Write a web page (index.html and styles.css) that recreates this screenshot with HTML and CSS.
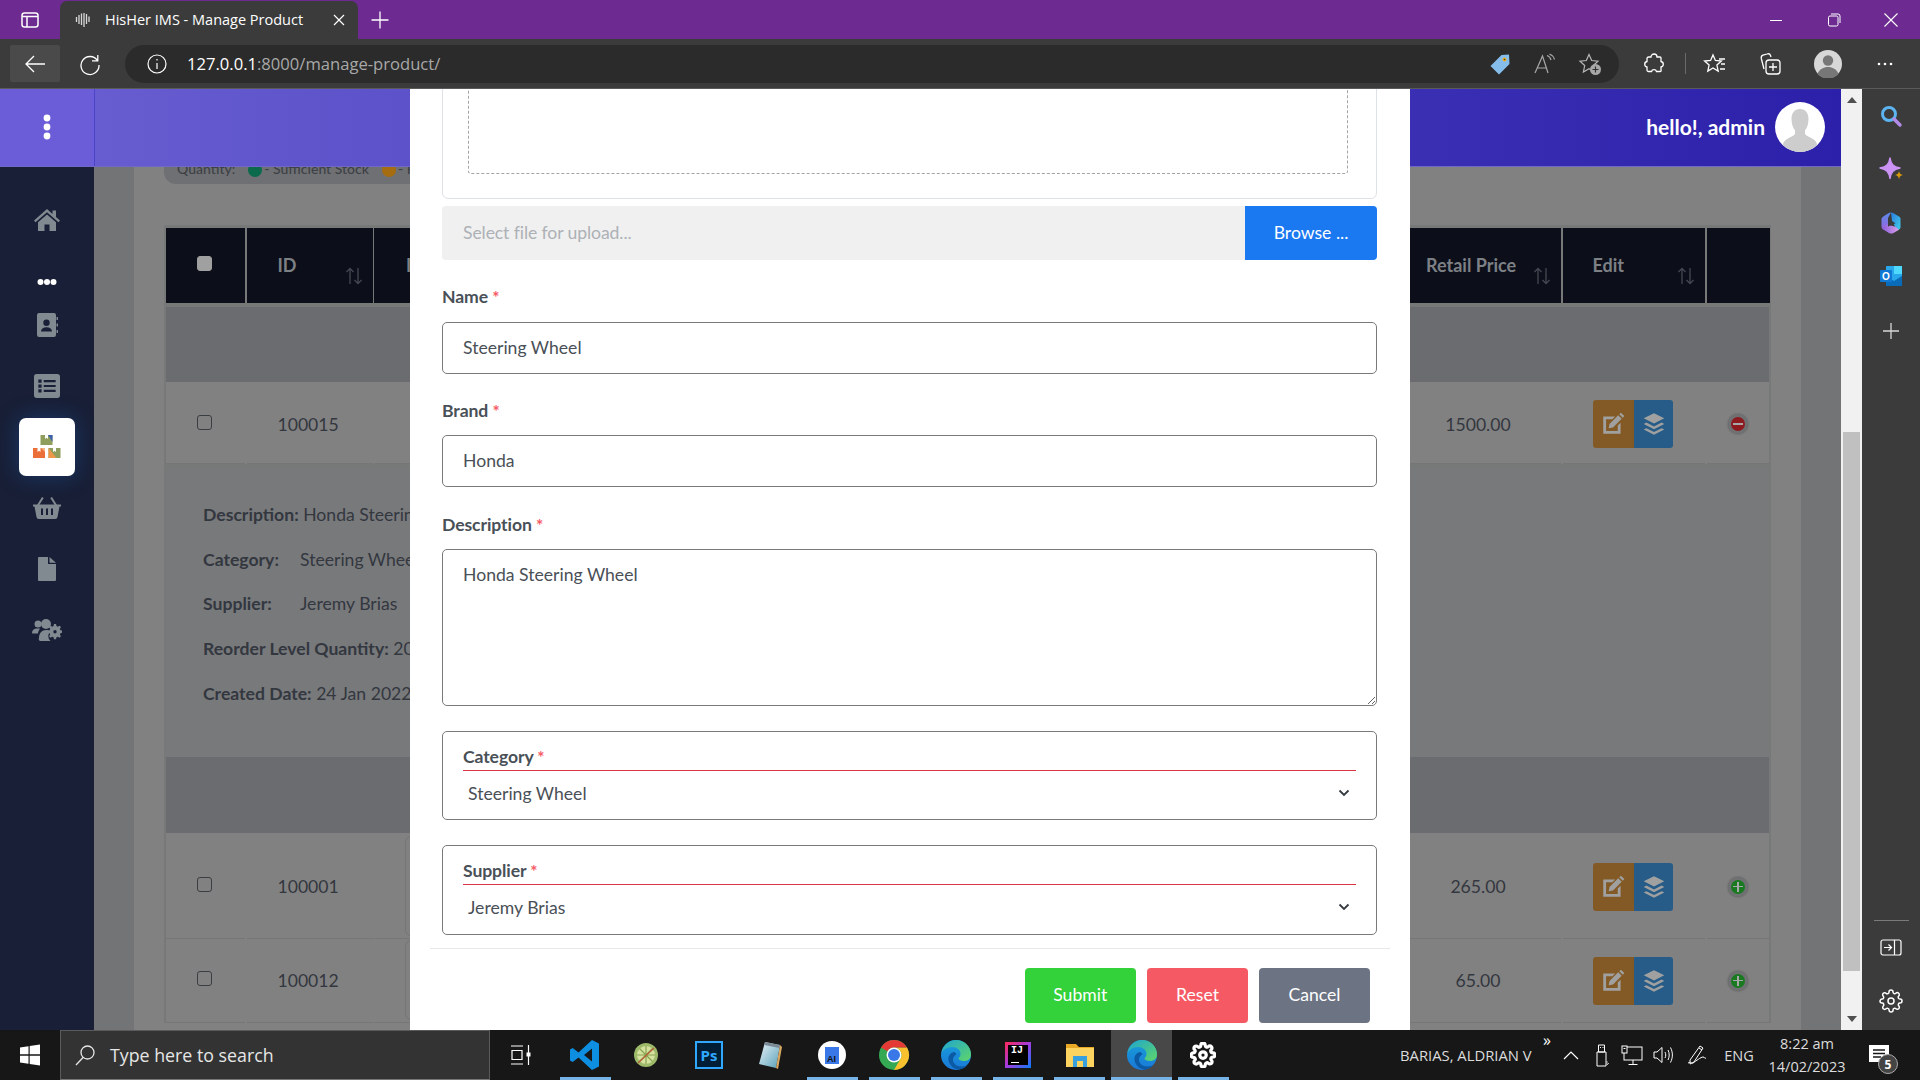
FILE: index.html
```html
<!DOCTYPE html>
<html lang="en">
<head>
<meta charset="utf-8">
<title>HisHer IMS - Manage Product</title>
<link rel="stylesheet" href="styles.css">
</head>
<body>
<svg class="sprite" aria-hidden="true">
  <defs>
    <linearGradient id="edgeBlue" x1="0" y1="0" x2="0" y2="1"><stop offset="0" stop-color="#18a0d8"/><stop offset="1" stop-color="#1a78d8"/></linearGradient>
    <linearGradient id="edgeGreen" x1="0" y1="0" x2="1" y2="1"><stop offset="0" stop-color="#1fa5d0"/><stop offset="1" stop-color="#5fd668"/></linearGradient>
    <linearGradient id="noteGrad" x1="0" y1="0" x2="1" y2="1"><stop offset="0" stop-color="#e8f4f8"/><stop offset="1" stop-color="#5aa0b8"/></linearGradient>
    <linearGradient id="copLeft" x1="0" y1="0" x2="0" y2="1"><stop offset="0" stop-color="#5a8ae8"/><stop offset="1" stop-color="#a060e0"/></linearGradient>
    <linearGradient id="copTop" x1="0" y1="0" x2="1" y2="1"><stop offset="0" stop-color="#2c7be0"/><stop offset="1" stop-color="#40d0e8"/></linearGradient>
    <linearGradient id="copBot" x1="0" y1="0" x2="1" y2="0"><stop offset="0" stop-color="#8a5cd8"/><stop offset="1" stop-color="#d8a0ec"/></linearGradient>
    <symbol id="gear" viewBox="0 0 24 24"><path d="M12 15a3 3 0 1 0 0-6 3 3 0 0 0 0 6z M19.4 15a1.65 1.65 0 0 0 .33 1.82l.06.06a2 2 0 0 1 0 2.83 2 2 0 0 1-2.83 0l-.06-.06a1.65 1.65 0 0 0-1.82-.33 1.65 1.65 0 0 0-1 1.51V21a2 2 0 0 1-2 2 2 2 0 0 1-2-2v-.09A1.65 1.65 0 0 0 9 19.4a1.65 1.65 0 0 0-1.82.33l-.06.06a2 2 0 0 1-2.83 0 2 2 0 0 1 0-2.83l.06-.06a1.65 1.65 0 0 0 .33-1.82 1.65 1.65 0 0 0-1.51-1H3a2 2 0 0 1-2-2 2 2 0 0 1 2-2h.09A1.65 1.65 0 0 0 4.6 9a1.65 1.65 0 0 0-.33-1.82l-.06-.06a2 2 0 0 1 0-2.83 2 2 0 0 1 2.83 0l.06.06a1.65 1.65 0 0 0 1.82.33H9a1.65 1.65 0 0 0 1-1.51V3a2 2 0 0 1 2-2 2 2 0 0 1 2 2v.09a1.65 1.65 0 0 0 1 1.51 1.65 1.65 0 0 0 1.82-.33l.06-.06a2 2 0 0 1 2.83 0 2 2 0 0 1 0 2.83l-.06.06a1.65 1.65 0 0 0-.33 1.82V9a1.65 1.65 0 0 0 1.51 1H21a2 2 0 0 1 2 2 2 2 0 0 1-2 2h-.09a1.65 1.65 0 0 0-1.51 1z"/></symbol>
    <symbol id="edge" viewBox="0 0 32 32">
      <circle cx="16" cy="16" r="15" fill="url(#edgeBlue)"/>
      <path d="M1.500 14C3 6.500 9 1 16 1c8.500 0 15 6.500 15 14.500 0 4.500-3.500 6.500-7 6.500-3 0-5.500-1-5.500-2.500 0-1 2-1.500 2-4.500 0-4-3.500-7-8.500-7C6.500 8 3 11 1.500 14z" fill="url(#edgeGreen)"/>
      <path d="M14 13c-4 1-6 4-5.500 8 .6 5 5 9 10.500 9.700 3-.5 6-2 8-4.400-5 2.200-11.500 1.500-13.500-3-1.300-3.300 0-6.300 3-8-.8-1.200-1.500-2.200-2.500-2.300z" fill="#0c59a4"/>
    </symbol>
    <symbol id="pen-box" viewBox="0 0 24 24"><path d="M3 5h11l-2.600 2.600H5.600v10.800h10.800v-5l2.600-2.600V21H3z"/><path d="M19.300 1.500l3.200 3.200-1.500 1.500-3.200-3.200zM16.800 4l3.200 3.200-8 8-4 .8.800-4z"/></symbol>
    <symbol id="layers" viewBox="0 0 24 24"><path d="M12 2l9.500 4.700L12 11.500 2.500 6.700z"/><path d="M5 10.700l7 3.500 7-3.500 2.500 1.300-9.500 4.800L2.500 12z"/><path d="M5 15.900l7 3.500 7-3.500 2.500 1.200L12 22l-9.500-4.900z"/></symbol>
    <symbol id="sort-arrows" viewBox="0 0 18 18"><path d="M5 17V1.500M1.500 5L5 1.500 8.500 5M13 1v15.500M9.500 13l3.500 3.500 3.500-3.500" fill="none" stroke-width="1.300"/></symbol>
  </defs>
</svg>

<header class="tabstrip">
  <div class="strip-btn first">
    <svg class="i20" viewBox="0 0 20 20" fill="none" stroke="#fff" stroke-width="1.500"><rect x="2" y="3" width="16" height="14" rx="2.500"/><path d="M2 6.500h16M7 6.500V17" stroke-width="1.500"/></svg>
  </div>
  <div class="tab">
    <svg class="i18 favicon" viewBox="0 0 18 18" fill="none" stroke="#d8d8d8" stroke-width="1.300"><path d="M2.500 6v5M5 4v9M7.500 2.500V14M10 2v14M12.500 3v10M15 5.500V11"/></svg>
    <span class="tab-title">HisHer IMS - Manage Product</span>
    <svg class="i14 tab-close" viewBox="0 0 14 14" stroke="#fff" stroke-width="1.200"><path d="M2 2l10 10M12 2L2 12"/></svg>
  </div>
  <div class="strip-btn newtab">
    <svg class="i20" viewBox="0 0 20 20" stroke="#fff" stroke-width="1.300"><path d="M10 1.500v17M1.500 10h17"/></svg>
  </div>
  <div class="grow"></div>
  <div class="win-btn"><svg class="i14" viewBox="0 0 14 14" stroke="#fff" stroke-width="1"><path d="M1 7.500h12"/></svg></div>
  <div class="win-btn"><svg class="i14" viewBox="0 0 14 14" fill="none" stroke="#fff" stroke-width="1"><rect x="1.500" y="3" width="9.500" height="10" rx="1.500"/><path d="M4 1h7a2 2 0 0 1 2 2v7"/></svg></div>
  <div class="win-btn"><svg class="i16" viewBox="0 0 16 16" stroke="#fff" stroke-width="1.100"><path d="M1.500 1.500l13 13M14.500 1.500l-13 13"/></svg></div>
</header>

<nav class="toolbar">
  <div class="tool back"><svg class="i24" viewBox="0 0 24 24" fill="none" stroke="#fff" stroke-width="1.300"><path d="M22 12H3M11 4l-8 8 8 8"/></svg></div>
  <div class="tool refresh"><svg class="i24" viewBox="0 0 24 24" fill="none" stroke="#fff" stroke-width="1.300"><path d="M19.500 8.500A9 9 0 1 0 21 13M19.800 3v5.800H14"/></svg></div>
  <div class="address">
    <svg class="i22 addr-info" viewBox="0 0 22 22" fill="none" stroke="#fff" stroke-width="1.200"><circle cx="11" cy="11" r="9"/><path d="M11 10v6M11 6v1.600"/></svg>
    <span class="url"><span class="url-host">127.0.0.1</span>:8000/manage-product/</span>
    <div class="grow"></div>
    <div class="addr-tool"><svg class="i24" viewBox="0 0 24 24"><path d="M21 2.500l.5 9.500L11 22.500 2.500 14 13.500 3z" fill="#85bdeb"/><circle cx="16.500" cy="7.500" r="2" fill="#f2b01e"/><circle cx="16.500" cy="7.500" r=".8" fill="#333"/></svg></div>
    <div class="addr-tool"><svg class="i24" viewBox="0 0 24 24" fill="none" stroke="#a8a8a8" stroke-width="1.200"><path d="M2 21L9.500 4 15 21M4.500 16h9M14 3.500c2 .8 3.500 2.300 4 4.500M16.500 2c2.500 1 4.300 3 5 5.500"/></svg></div>
    <div class="addr-tool"><svg class="i24" viewBox="0 0 24 24"><path d="M11 2.500l2.700 6 6.300.7-4.700 4.300 1.300 6.500-5.600-3.300L5.400 20l1.300-6.500L2 9.200l6.300-.7z" fill="none" stroke="#b8b8b8" stroke-width="1.200"/><circle cx="17.500" cy="17.500" r="5.500" fill="#a8a8a8"/><path d="M17.500 14.500v6M14.500 17.500h6" stroke="#333" stroke-width="1.200"/></svg></div>
  </div>
  <div class="tools">
    <div class="tool t-puzzle"><svg class="i24" viewBox="0 0 24 24" fill="none" stroke="#fff" stroke-width="1.300"><path d="M9 5a3 3 0 0 1 6 0h3a1 1 0 0 1 1 1v3.500a2.800 2.800 0 0 1 0 5.500v3a1 1 0 0 1-1 1.500h-3.500a2.600 2.600 0 0 0-5 0H6.500a1.500 1.500 0 0 1-1.500-1.500v-3a2.800 2.800 0 0 1 0-5.500V6.500A1.500 1.500 0 0 1 6.500 5z"/></svg></div>
    <div class="tool-sep"></div>
    <div class="tool t-fav"><svg class="i24" viewBox="0 0 24 24" fill="none" stroke="#fff" stroke-width="1.300"><path d="M10 3l2.400 5.500 6 .6-4.500 4 1.300 6L10 16l-5.200 3.100 1.300-6-4.500-4 6-.6zM16 7h6M18 12h4M17 17h5"/></svg></div>
    <div class="tool t-coll"><svg class="i24" viewBox="0 0 24 24" fill="none" stroke="#fff" stroke-width="1.300"><rect x="8" y="8" width="14" height="14" rx="3"/><path d="M15 11v8M11 15h8M13 5l-.5-1.500C12 2 10.500 1.500 9 2L5 3.200C3.500 3.700 3 5 3.300 6.500L6 17"/></svg></div>
    <div class="tool t-avatar"><svg class="i28" viewBox="0 0 28 28"><circle cx="14" cy="14" r="14" fill="#d8d8d8"/><circle cx="14" cy="10.500" r="5.200" fill="#777"/><path d="M3.500 24c2-5 6-7 10.500-7s8.500 2 10.500 7a14 14 0 0 1-21 0z" fill="#777"/></svg></div>
    <div class="tool t-dots"><svg class="i18" viewBox="0 0 18 18" fill="#fff"><circle cx="3" cy="9" r="1.300"/><circle cx="9" cy="9" r="1.300"/><circle cx="15" cy="9" r="1.300"/></svg></div>
  </div>
</nav>

<div class="viewport">
  <div class="page">
    <div class="topbar">
      <div class="brand"><svg class="kebab" viewBox="0 0 8 26" fill="#fff"><circle cx="4" cy="4" r="3.400"/><circle cx="4" cy="13" r="3.400"/><circle cx="4" cy="22" r="3.400"/></svg></div>
      <div class="userbar">
        <span class="hello">hello!, admin</span>
        <svg class="avatar" viewBox="0 0 50 50"><circle cx="25" cy="25" r="25" fill="#fff"/><path d="M25 7c5.500 0 8.500 4 8.500 10 0 5-1.500 9-3.500 11.500v3c0 2 4 3 8 5.500 3 2 4 4 4 6A24.800 24.800 0 0 1 25 50a24.800 24.800 0 0 1-17-7c0-2 1-4 4-6 4-2.500 8-3.500 8-5.500v-3C18 26 16.500 22 16.500 17 16.500 11 19.500 7 25 7z" fill="#cdcdcd"/></svg>
      </div>
    </div>

    <div class="workspace">
      <aside class="sidebar">
        <div class="side-item"><svg class="side-icon" viewBox="0 0 26 24"><path d="M13 1L0 12.500l1.500 1.800L13 4.300l11.500 10 1.500-1.800-4-3.500V2.500h-3.500v3.400z"/><path d="M13 6.500L4 14.300V23h6.500v-6.500h5V23H22v-8.700z"/></svg></div>
        <div class="side-more"><svg class="more-icon" viewBox="0 0 20 8" fill="#fff"><circle cx="3.500" cy="4" r="3"/><circle cx="10" cy="4" r="3"/><circle cx="16.500" cy="4" r="3"/></svg></div>
        <div class="side-item"><svg class="side-icon" viewBox="0 0 24 24"><path fill-rule="evenodd" d="M4 0h15a2 2 0 0 1 2 2v20a2 2 0 0 1-2 2H4a2 2 0 0 1-2-2V2a2 2 0 0 1 2-2zm7.500 6.500a3.200 3.200 0 1 0 0 6.400 3.200 3.200 0 0 0 0-6.400zM6 18.500h11c0-2.500-2-4.200-5.500-4.200S6 16 6 18.500z"/><path d="M21.500 4h1.500v3h-1.500zM21.500 10.500h1.500v3h-1.500zM21.500 17h1.500v3h-1.500z"/></svg></div>
        <div class="side-item"><svg class="side-icon" viewBox="0 0 24 22"><path fill-rule="evenodd" d="M2.500 0h19A2.500 2.500 0 0 1 24 2.500v17a2.500 2.500 0 0 1-2.500 2.500h-19A2.500 2.500 0 0 1 0 19.500v-17A2.500 2.500 0 0 1 2.500 0zM4 5v3h3V5zm0 4.500v3h3v-3zM4 14v3h3v-3zm5-8.500v2h11v-2zm0 4.500v2h11v-2zm0 4.500v2h11v-2z"/></svg></div>
        <div class="side-item"><div class="side-active">
          <svg class="box-icon" viewBox="0 0 28 24">
            <rect x="7.500" y="1" width="12" height="10" fill="#8f9e5c"/><path d="M12 1h3v4l-1.500-1.300L12 5z" fill="#fff"/><path d="M15 1h4.500v7z" fill="#3f62b0"/>
            <rect x="0" y="14" width="12" height="10" fill="#ea6f38"/><path d="M4.500 14h3v4L6 16.700 4.500 18z" fill="#fff"/><path d="M8 14h4v4z" fill="#f4b684"/>
            <rect x="15.500" y="14" width="12" height="10" fill="#8f9e5c"/><path d="M20 14h3v4l-1.500-1.300L20 18z" fill="#fff"/><path d="M15.500 14l8 10h-8z" fill="#ef9648"/>
          </svg>
        </div></div>
        <div class="side-item"><svg class="side-icon wide" viewBox="0 0 28 22"><path d="M9 0l1.700 1-4.400 7H4zM19 0l-1.700 1 4.400 7H24z"/><path fill-rule="evenodd" d="M0 7.500h28v2h-1.500L24.500 20a2.300 2.300 0 0 1-2.300 2H5.800a2.300 2.300 0 0 1-2.300-2L1.500 9.500H0zM8 11.500V18h2v-6.500zm5 0V18h2v-6.500zm5 0V18h2v-6.500z"/></svg></div>
        <div class="side-item"><svg class="side-icon" viewBox="0 0 18 24"><path d="M0 1a1 1 0 0 1 1-1h9v7h8v16a1 1 0 0 1-1 1H1a1 1 0 0 1-1-1z"/><path d="M11.500 0L18 5.800h-6.500z"/></svg></div>
        <div class="side-item"><svg class="side-icon wider" viewBox="0 0 30 22"><circle cx="6" cy="5" r="3.500"/><circle cx="14" cy="5" r="5"/><path d="M0 14c0-3 2-4.500 5-4.500h3c-1 2-2 3-2 5H1a1 1 0 0 1-1-.5z"/><path d="M7 19c0-5 3-8 7-8 2 0 3 .5 4 1.200l-1 2a7 7 0 0 0 1.500 7.800H9a2 2 0 0 1-2-3z"/><path fill-rule="evenodd" d="M23 9l1 .1.500 2 1.300.6 1.800-1 1.300 1.400-1 1.800.5 1.300 2 .5v2l-2 .5-.5 1.300 1 1.800-1.300 1.400-1.800-1-1.300.5-.5 2h-2l-.5-2-1.300-.5-1.800 1-1.300-1.400 1-1.800-.5-1.300-2-.5v-2l2-.5.5-1.300-1-1.800 1.300-1.400 1.800 1 1.300-.6.500-2zm0 6a1.700 1.700 0 1 0 0 3.400 1.700 1.700 0 0 0 0-3.400z" transform="translate(0 -4)"/></svg></div>
      </aside>

      <main class="main">
        <div class="panel">
          <div class="legend">
            <span>Quantity:</span>
            <i class="dot dot-green"></i><span>- Sufficient Stock</span>
            <i class="dot dot-orange"></i><span>- Reorder Level</span>
          </div>
          <div class="table">
            <div class="tr thead">
              <div class="th center cb-cell"><span class="cb cb-on"></span></div>
              <div class="th"><span class="th-label id-label">ID</span><svg class="sort" aria-hidden="true"><use href="#sort-arrows"/></svg></div>
              <div class="th th-item"><span class="th-label">Image</span></div>
              <div class="th"><span class="th-label retail-label">Retail Price</span><svg class="sort" aria-hidden="true"><use href="#sort-arrows"/></svg></div>
              <div class="th"><span class="th-label edit-label">Edit</span><svg class="sort" aria-hidden="true"><use href="#sort-arrows"/></svg></div>
              <div class="th"></div>
            </div>
            <div class="band first-band"></div>
            <div class="tr row row-a">
              <div class="td center cb-cell"><span class="cb"></span></div>
              <div class="td id-cell">100015</div>
              <div class="td"></div>
              <div class="td center">1500.00</div>
              <div class="td center"><div class="actions"><span class="act act-edit"><svg class="act-icon" aria-hidden="true"><use href="#pen-box"/></svg></span><span class="act act-stock"><svg class="act-icon" aria-hidden="true"><use href="#layers"/></svg></span></div></div>
              <div class="td center"><span class="toggle toggle-minus"></span></div>
            </div>
            <div class="detail">
              <p class="detail-line"><b>Description:</b> Honda Steering Wheel</p>
              <p class="detail-line"><b class="detail-key">Category:</b>Steering Wheel</p>
              <p class="detail-line"><b class="detail-key">Supplier:</b>Jeremy Brias</p>
              <p class="detail-line"><b>Reorder Level Quantity:</b> 20</p>
              <p class="detail-line"><b>Created Date:</b> 24 Jan 2022</p>
            </div>
            <div class="band second-band"></div>
            <div class="tr row row-b">
              <div class="td center cb-cell"><span class="cb"></span></div>
              <div class="td id-cell">100001</div>
              <div class="td item-cell"><span class="item-frame"></span></div>
              <div class="td center">265.00</div>
              <div class="td center"><div class="actions"><span class="act act-edit"><svg class="act-icon" aria-hidden="true"><use href="#pen-box"/></svg></span><span class="act act-stock"><svg class="act-icon" aria-hidden="true"><use href="#layers"/></svg></span></div></div>
              <div class="td center"><span class="toggle toggle-plus"></span></div>
            </div>
            <div class="tr row row-c">
              <div class="td center cb-cell"><span class="cb"></span></div>
              <div class="td id-cell">100012</div>
              <div class="td item-cell"><span class="item-frame"></span></div>
              <div class="td center">65.00</div>
              <div class="td center"><div class="actions"><span class="act act-edit"><svg class="act-icon" aria-hidden="true"><use href="#pen-box"/></svg></span><span class="act act-stock"><svg class="act-icon" aria-hidden="true"><use href="#layers"/></svg></span></div></div>
              <div class="td center"><span class="toggle toggle-plus"></span></div>
            </div>
          </div>
        </div>
      </main>
    </div>

    <section class="modal">
      <div class="preview"><div class="dropzone"></div></div>
      <div class="filerow">
        <div class="file-hint">Select file for upload...</div>
        <div class="browse">Browse ...</div>
      </div>
      <label class="flabel first-label">Name <em>*</em></label>
      <input class="finput" type="text" value="Steering Wheel">
      <label class="flabel brand-label">Brand <em>*</em></label>
      <input class="finput" type="text" value="Honda">
      <label class="flabel desc-label">Description <em>*</em></label>
      <textarea class="farea">Honda Steering Wheel</textarea>
      <div class="fselect select-cat">
        <div class="fselect-label">Category <em>*</em></div>
        <div class="fselect-value"><span>Steering Wheel</span><svg class="chev" viewBox="0 0 12 8" fill="none" stroke="#343a40" stroke-width="1.800"><path d="M1.500 1.500L6 6l4.500-4.500"/></svg></div>
      </div>
      <div class="fselect select-sup">
        <div class="fselect-label">Supplier <em>*</em></div>
        <div class="fselect-value"><span>Jeremy Brias</span><svg class="chev" viewBox="0 0 12 8" fill="none" stroke="#343a40" stroke-width="1.800"><path d="M1.500 1.500L6 6l4.500-4.500"/></svg></div>
      </div>
      <div class="mfooter">
        <button class="btn btn-submit" type="button">Submit</button>
        <button class="btn btn-reset" type="button">Reset</button>
        <button class="btn btn-cancel" type="button">Cancel</button>
      </div>
    </section>
  </div>

  <div class="scrollbar">
    <span class="arrow-up"></span>
    <span class="thumb"></span>
    <div class="grow"></div>
    <span class="arrow-down"></span>
  </div>

  <aside class="edgebar">
    <div class="edge-item"><svg class="i24" viewBox="0 0 24 24" fill="none"><circle cx="10" cy="10" r="6.500" stroke="#5cb4f0" stroke-width="3"/><path d="M15 15l6 6" stroke="#b28ae8" stroke-width="3.500" stroke-linecap="round"/></svg></div>
    <div class="edge-item"><svg class="i26 sparkle" viewBox="0 0 26 26"><path d="M11 2c1 6.500 3.500 9 10 10-6.500 1.300-9 3.800-10 10.500C10 15.800 7.500 13.300 1 12c6.500-1 9-3.500 10-10z" fill="#cb94f4" stroke="#cb94f4" stroke-width="1.500" stroke-linejoin="round"/><path d="M20 15c.4 2.500 1.500 3.600 4 4-2.500.5-3.600 1.500-4 4.500-.4-3-1.500-4-4-4.500 2.500-.4 3.600-1.500 4-4z" fill="#d8980c"/></svg></div>
    <div class="edge-item"><svg class="i24" viewBox="0 0 24 24"><path d="M12 1.500c1 0 2 .5 3 1l5 3c1 .6 1.500 1.500 1.500 2.500v8c0 1-.5 2-1.500 2.500l-2 1-5-9.500z" fill="url(#copTop)"/><path d="M12 1.500c-1 0-2 .5-3 1l-4 2.500C3.500 6 2.500 7 2.500 8.500v7c0 1.500 1 2.500 2 3L9 21V7z" fill="url(#copLeft)"/><path d="M2.800 17c.4.700 1 1.200 1.700 1.500l5.500 3.500c1.500.8 3 .8 4.500 0l5.500-3.300-3.500-3L8 13.500z" fill="url(#copBot)"/><path d="M9 7.500l7.500 4.700L9 15.500z" fill="#3b3b3b"/></svg></div>
    <div class="edge-item"><svg class="i24" viewBox="0 0 24 24"><rect x="7" y="2" width="16" height="20" rx="1" fill="#28a8ea"/><rect x="15" y="2" width="8" height="8" fill="#50d9ff"/><path d="M7 12l8 5 8-5v10H7z" fill="#0a6cb8"/><rect x="1" y="6" width="12" height="12" rx="1" fill="#0f78d4"/><text class="outlook-o" x="7" y="15.500" text-anchor="middle">O</text></svg></div>
    <div class="edge-item edge-plus"><svg class="i20" viewBox="0 0 20 20" stroke="#d8d8d8" stroke-width="1.300"><path d="M10 2v16M2 10h16"/></svg></div>
    <div class="grow"></div>
    <div class="edge-divider"></div>
    <div class="edge-item"><svg class="i22" viewBox="0 0 22 20" fill="none" stroke="#fff" stroke-width="1.200"><rect x="1" y="2" width="20" height="15" rx="2"/><path d="M14.500 2v15M4 9.500h7.500M8.500 6.500l3 3-3 3"/></svg></div>
    <div class="edge-item edge-gear"><svg class="i24 gear-line" aria-hidden="true"><use href="#gear"/></svg></div>
  </aside>
</div>

<footer class="taskbar">
  <div class="start"><svg class="i22" viewBox="0 0 22 22" fill="#fff"><path d="M1 3.500l8.500-1.200v8H1zM10.700 2.100L21 .6v9.700H10.700zM1 11.700h8.500v8L1 18.500zM10.700 11.700H21v9.700l-10.300-1.500z"/></svg></div>
  <div class="search">
    <svg class="i24" viewBox="0 0 24 24" fill="none" stroke="#e6e6e6" stroke-width="1.300"><circle cx="14.500" cy="9.500" r="6.500"/><path d="M10 14.500L3 22"/></svg>
    <span class="search-text">Type here to search</span>
  </div>
  <div class="taskview"><svg class="i22" viewBox="0 0 22 22" fill="none" stroke="#fff" stroke-width="1.200"><path d="M2 2h12M2 20h12M3 6.500h10v9H3zM19.500 1v20"/><rect x="17.500" y="8.500" width="4" height="4" fill="#fff" stroke="none"/></svg></div>
  <div class="task on"><svg class="i32" viewBox="0 0 32 32"><path d="M23 1l7 3.500v23L23 31 9.500 18.500 3.700 23 1 21.500v-11L3.700 9l5.800 4.500zm0 8.500L15 16l8 6.500z" fill="#0e8ee0" fill-rule="evenodd"/></svg></div>
  <div class="task plain lime"><svg class="i26" viewBox="0 0 26 26"><circle cx="13" cy="13" r="12" fill="#9db96a"/><circle cx="13" cy="13" r="9" fill="#d6e2a0"/><path d="M13 4v18M4 13h18M6.500 6.500l13 13M19.500 6.500l-13 13" stroke="#86a34e" stroke-width="1.200"/><path d="M5 21L21 6" stroke="#b4623a" stroke-width="1.500"/></svg></div>
  <div class="task plain"><div class="ps-icon">Ps</div></div>
  <div class="task plain note"><svg class="i32" viewBox="0 0 32 32"><path d="M12 3l15 3-4 23L6 25z" fill="url(#noteGrad)"/><path d="M12 3l15 3-.6 3-15-3z" fill="#7a8a95"/><path d="M27 6l2 2-4 22-2-1z" fill="#d8a860"/></svg></div>
  <div class="task"><div class="ai-icon"><span class="ai-doc">AI</span></div></div>
  <div class="task"><svg class="i32" viewBox="0 0 32 32"><circle cx="16" cy="16" r="15" fill="#34a853"/><path d="M29 8.500A15 15 0 0 1 16 31l6.500-11.250A7.500 7.500 0 0 0 16 8.500z" fill="#fbc02d"/><path d="M3 8.500a15 15 0 0 1 26 0H16a7.500 7.500 0 0 0-6.500 3.750z" fill="#e53935"/><circle cx="16" cy="16" r="7.500" fill="#fff"/><circle cx="16" cy="16" r="6" fill="#3b78e7"/></svg></div>
  <div class="task"><svg class="i32" aria-hidden="true"><use href="#edge"/></svg></div>
  <div class="task"><div class="ij-icon"><div class="ij-inner">IJ<i class="ij-bar"></i></div></div></div>
  <div class="task"><svg class="i30" viewBox="0 0 30 30"><path d="M1 4h10l3 3h15v20H1z" fill="#e9a825"/><rect x="1" y="8" width="28" height="19" fill="#fbd35e"/><path d="M8 27V16h14v11h-4v-6h-6v6z" fill="#38a0de"/></svg></div>
  <div class="task active"><svg class="i32" aria-hidden="true"><use href="#edge"/></svg></div>
  <div class="task gear-task"><svg class="i26 gear-solid" aria-hidden="true"><use href="#gear"/></svg></div>

  <div class="tray">
    <span class="tray-user">BARIAS, ALDRIAN V</span>
    <span class="tray-more">»</span>
    <div class="tray-icon"><svg class="i18" viewBox="0 0 18 18" fill="none" stroke="#fff" stroke-width="1.200"><path d="M2 13l7-7 7 7"/></svg></div>
    <div class="tray-icon icon-gap"><svg class="i24" viewBox="0 0 24 24" fill="none" stroke="#fff" stroke-width="1"><path d="M7 9h9v14H7zM8.500 2h6v7h-6zM10 4.500h1M12.500 4.500h1"/><path d="M17 18v4l2-2" stroke="#bbb"/></svg></div>
    <div class="tray-icon"><svg class="i24" viewBox="0 0 24 24" fill="none" stroke="#fff" stroke-width="1"><rect x="4" y="4" width="18" height="13"/><path d="M13 17v4M8.500 21.500h9"/><rect x="2" y="3" width="5" height="7" fill="#171717"/><path d="M3.500 5.500h2"/></svg></div>
    <div class="tray-icon"><svg class="i24" viewBox="0 0 24 24" fill="none" stroke="#fff" stroke-width="1"><path d="M4 9v6h3l5 4.500v-15L7 9zM15 9c1 2 1 4 0 6M18 7c1.600 3 1.600 7 0 10M20.500 4.500c2.500 5 2.500 10 0 15"/></svg></div>
    <div class="tray-icon tray-pen"><svg class="i24" viewBox="0 0 24 24" fill="none" stroke="#fff" stroke-width="1"><path d="M5 17L15 3l3 2-9 14-4 2zM3 20c4-2 3 1 5 0 3-2 8-6 10-6 2 0 1 2 3 1M14 5l3 2"/></svg></div>
    <span class="tray-lang">ENG</span>
    <div class="clock"><span>8:22 am</span><span>14/02/2023</span></div>
    <div class="notif">
      <svg class="i22" viewBox="0 0 22 22"><path d="M1 1h20v17H1z" fill="#fff"/><path d="M5 6h12M5 9.500h12M5 13h8" stroke="#171717" stroke-width="1.300"/></svg>
      <span class="notif-badge">5</span>
    </div>
  </div>
</footer>
</body>
</html>
```
FILE: styles.css
```css
* { box-sizing: border-box; }
html, body { margin: 0; padding: 0; height: 100%; overflow: hidden; }
body { width: 1920px; height: 1080px; display: flex; flex-direction: column; font-family: "Lato", "Liberation Sans", sans-serif; background: #171717; }
.sprite { position: absolute; width: 0; height: 0; }
.grow { flex: 1 1 auto; }
.i14 { width: 14px; height: 14px; }
.i16 { width: 16px; height: 16px; }
.i18 { width: 18px; height: 18px; }
.i20 { width: 20px; height: 20px; }
.i22 { width: 22px; height: 22px; }
.i24 { width: 24px; height: 24px; }
.i26 { width: 26px; height: 26px; }
.i28 { width: 28px; height: 28px; }
.i30 { width: 30px; height: 30px; }
.i32 { width: 32px; height: 32px; }

/* Browser tab strip */
.tabstrip { flex: 0 0 39px; height: 39px; background: #6d2a90; display: flex; align-items: stretch; }
.strip-btn { display: flex; align-items: center; justify-content: center; }
.strip-btn.first { width: 60px; }
.strip-btn.newtab { width: 44px; }
.tab { width: 298px; margin-top: 1px; background: #3b3b3b; border-radius: 7px 7px 0 0; display: flex; align-items: center; padding: 0 12px 0 14px; color: #fff; }
.favicon { margin-right: 13px; }
.tab-title { font: 14.5px "Open Sans", sans-serif; flex: 1; white-space: nowrap; padding-bottom: 1px; }
.win-btn { width: 57.500px; display: flex; align-items: center; justify-content: center; }

/* Browser toolbar */
.toolbar { flex: 0 0 50px; height: 50px; background: #3b3b3b; border-bottom: 1px solid #5a5a5a; display: flex; align-items: center; padding-left: 10px; }
.tool { width: 44px; height: 37px; display: flex; align-items: center; justify-content: center; }
.back { width: 50px; background: #4a4a4a; border-radius: 2px; }
.refresh { width: 60px; }
.address { width: 1494.500px; height: 38px; margin-left: 4.500px; background: #2b2b2b; border-radius: 19px; display: flex; align-items: center; padding: 0 7px 0 21.500px; }
.addr-info { flex: none; }
.url { margin-left: 19px; font: 16.600px "Open Sans", sans-serif; color: #a8a8a8; white-space: nowrap; }
.url-host { color: #fff; }
.addr-tool { width: 44px; margin-left: 1px; display: flex; justify-content: center; }
.tools { display: flex; align-items: center; }
.t-puzzle { margin-left: 13px; }
.tool-sep { width: 1px; height: 21px; margin-left: 9px; background: #6a6a6a; }
.t-fav { margin-left: 7px; }
.t-coll { margin-left: 11px; }
.t-avatar { margin-left: 14px; }
.t-dots { margin-left: 13px; }

/* Page */
.viewport { flex: 1 1 auto; display: flex; min-height: 0; }
.page { width: 1841px; position: relative; display: flex; flex-direction: column; overflow: hidden; }
.topbar { flex: 0 0 78px; display: flex; position: relative; z-index: 2; background: linear-gradient(90deg, #6a60d2, #2c20aa); border-bottom: 1px solid #6f68c8; }
.brand { width: 95px; background: #6b5dd8; border-right: 1px solid #4b44c8; display: flex; align-items: center; justify-content: center; padding-bottom: 2px; }
.kebab { width: 8px; height: 26px; }
.userbar { flex: 1; display: flex; align-items: center; justify-content: flex-end; padding: 0 16px 1px 0; gap: 10px; }
.hello { color: #fff; font-size: 21px; font-weight: 700; padding-bottom: 2px; }
.avatar { width: 50px; height: 50px; }

.workspace { flex: 1 1 auto; display: flex; min-height: 0; }
.sidebar { width: 94px; flex: none; background: #181f36; padding-top: 22px; display: flex; flex-direction: column; align-items: stretch; }
.side-item { height: 61px; flex: none; display: flex; align-items: center; justify-content: center; }
.side-more { height: 44px; flex: none; display: flex; align-items: flex-end; justify-content: center; padding-bottom: 8px; }
.more-icon { width: 20px; height: 8px; }
.side-icon { width: 26px; height: 24px; fill: #808a90; }
.side-icon.wide { width: 28px; height: 22px; }
.side-icon.wider { width: 30px; height: 22px; }
.side-active { width: 56px; height: 58px; background: #fff; border-radius: 7px; box-shadow: 0 0 22px rgba(30, 90, 170, .45); display: flex; align-items: center; justify-content: center; padding-bottom: 2px; }
.box-icon { width: 28px; height: 24px; }

.main { flex: 1 1 auto; background: #737476; padding: 0 40px; min-width: 0; overflow: hidden; }
.panel { height: 100%; display: flow-root; background: #818181; padding: 0 30px 0 30px; }
.legend { width: 700px; height: 38px; margin-top: -21px; background: #6f7073; border-radius: 0 0 12px 12px; display: flex; align-items: flex-end; gap: 2px; padding: 0 0 7px 13px; font-size: 14px; font-weight: 500; color: #3d4046; white-space: nowrap; }
.dot { width: 14px; height: 14px; border-radius: 50%; margin-left: 11px; }
.dot-green { background: #0b6a4b; }
.dot-orange { background: #a56c12; margin-left: 11px; }

.table { margin-top: 41px; padding: 3px 2px 0; background: #777878; }
.tr { display: grid; grid-template-columns: 79px 126px 1019.500px 166px 142.500px 63px; column-gap: 1.500px; }
.thead { height: 75px; }
.th { background: #0c0f1a; display: flex; align-items: center; position: relative; }
.th.center { justify-content: center; }
.cb-cell { padding-right: 2px; }
.th-label { color: #7d8085; font-size: 18px; font-weight: 700; white-space: nowrap; padding-bottom: 1px; }
.id-label { margin-left: 31px; }
.th-item .th-label { margin-left: 32px; }
.retail-label { margin-left: 31px; }
.edit-label { margin-left: 30px; }
.sort { position: absolute; right: 10px; top: 39px; width: 18px; height: 18px; stroke: #454850; }
.band { height: 75px; background: #6b6c6f; margin-top: 4px; }
.second-band { height: 76px; margin-top: 0; }
.row { background: #818181; color: #33373f; font-size: 17.600px; }
.row-a { height: 82px; padding-top: 3px; }
.row-b { height: 106px; padding-top: 2px; }
.row-c { height: 84px; }
.td { display: flex; align-items: center; border-bottom: 1px solid #767676; }
.td.center { justify-content: center; }
.id-cell { padding-left: 31px; }
.item-cell { align-items: stretch; padding: 1px 0 2px 31px; }
.item-frame { width: 100px; border: 1px solid #757575; border-radius: 6px; }
.cb { width: 15px; height: 15px; border: 1.500px solid #3a3d42; border-radius: 3px; margin-bottom: 4px; }
.cb-on { background: #a0a0a0; border-color: #a0a0a0; }
.actions { display: flex; height: 48px; margin-right: 2px; border-radius: 3px; overflow: hidden; }
.act { display: flex; align-items: center; justify-content: center; height: 48px; }
.act-edit { width: 41.500px; background: #835a25; }
.act-stock { width: 39px; background: #265c87; }
.act-icon { width: 26px; height: 26px; fill: #a0a0a0; }
.toggle { width: 20px; height: 20px; border-radius: 50%; border: 3px solid #6f7173; position: relative; box-shadow: 0 0 2px #555; }
.toggle-minus { background: #8c1a1f; }
.toggle-plus { background: #1a7a22; }
.toggle::before { content: ""; position: absolute; left: 2px; right: 2px; top: 6px; height: 1.500px; background: #a8a8a8; }
.toggle-plus::after { content: ""; position: absolute; top: 2px; bottom: 2px; left: 6px; width: 1.500px; background: #a8a8a8; }
.detail { height: 290px; margin-top: 3px; background: #78797b; padding: 36px 0 0 37px; color: #33373f; font-size: 17.600px; }
.detail-line { margin: 0; height: 44.700px; line-height: 24px; white-space: nowrap; }
.detail-key { display: inline-block; width: 97px; }
.detail b { font-weight: 700; }

/* Modal over the page */
.modal { position: absolute; top: 0; left: 410px; bottom: 0; width: 1000px; z-index: 5; background: #fff; padding: 0 33px 0 32px; overflow: hidden; display: flex; flex-direction: column; color: #495057; font-size: 17.600px; }
.preview { flex: none; height: 120px; margin-top: -10px; border: 1px solid #dee2e6; border-radius: 6px; padding: 0 28px 24px 25px; display: flex; }
.dropzone { flex: 1; border: 1px dashed #a4a4a4; border-radius: 3px; }
.filerow { flex: none; height: 54px; margin-top: 7px; display: flex; border-radius: 4px; overflow: hidden; }
.file-hint { flex: 1; background: #f0f0f0; color: #adb1b6; display: flex; align-items: center; padding: 0 0 2px 21px; letter-spacing: -.1px; }
.browse { width: 132px; background: #1a78f0; color: #fff; display: flex; align-items: center; justify-content: center; padding-bottom: 2px; }
.flabel { flex: none; height: 22px; line-height: 22px; margin: 26px 0 14px; font-weight: 700; letter-spacing: -.1px; }
.first-label { margin-top: 26px; }
.brand-label { margin: 26px 0 13px; }
.desc-label { margin: 27px 0 13px; }
.flabel em, .fselect-label em { color: #f55a64; font-style: normal; font-weight: 700; font-size: 17px; line-height: 1; position: relative; top: 1px; letter-spacing: 0; }
.finput { flex: none; height: 52px; border: 1px solid #7a7a7a; border-radius: 5px; padding: 0 20px 2px; font: inherit; color: inherit; outline: none; }
.farea { flex: none; height: 157px; border: 1px solid #7a7a7a; border-radius: 5px; padding: 13px 20px; font: inherit; color: inherit; outline: none; line-height: 24px; }
.fselect { flex: none; height: 89px; border: 1px solid #7a7a7a; border-radius: 5px; padding: 14px 20px 0; }
.select-cat { margin-top: 25px; }
.select-sup { margin-top: 25px; height: 90px; }
.fselect-label { height: 25px; line-height: 22px; border-bottom: 1px solid #dc3545; font-weight: 700; letter-spacing: -.1px; }
.fselect-value { height: 24px; margin-top: 10px; padding: 0 6px 0 5px; display: flex; align-items: center; justify-content: space-between; }
.chev { width: 12px; height: 8px; }
.mfooter { flex: none; margin: 13px -13px 0 -12px; padding: 19px 20px 0 0; border-top: 1px solid #e6e8ea; display: flex; justify-content: flex-end; gap: 11px; }
.btn { height: 55px; border: none; border-radius: 4px; color: #fff; font: 17.600px "Lato", sans-serif; padding: 0 0 2px; }
.btn-submit { width: 111.500px; background: #33d13a; }
.btn-reset { width: 101px; background: #f55a64; }
.btn-cancel { width: 111px; background: #6c7382; }

/* Scrollbar */
.scrollbar { width: 21px; flex: none; background: #f1f1f1; display: flex; flex-direction: column; align-items: center; padding-top: 8px; }
.arrow-up { width: 0; height: 0; border: 5px solid transparent; border-top: 0; border-bottom: 6px solid #505050; }
.thumb { width: 17px; height: 539px; margin-top: 329px; background: #c0c0c0; }
.arrow-down { width: 0; height: 0; border: 5px solid transparent; border-bottom: 0; border-top: 6px solid #505050; margin-bottom: 8px; }

/* Edge side bar */
.edgebar { width: 58px; flex: none; background: #3b3b3b; display: flex; flex-direction: column; align-items: center; padding: 0 0 2px; }
.edge-item { height: 53.500px; flex: none; display: flex; align-items: center; justify-content: center; }
.edge-plus { margin-top: 1px; }
.sparkle { margin-left: 2px; }
.edge-divider { width: 35px; height: 1px; background: #7a7a7a; }
.gear-line { fill: none; stroke: #fff; stroke-width: 1.500; }
.outlook-o { font: 700 10px "Liberation Sans", sans-serif; fill: #fff; }

/* Taskbar */
.taskbar { flex: 0 0 50px; height: 50px; background: #171717; display: flex; align-items: stretch; }
.start { width: 60px; display: flex; align-items: center; justify-content: center; }
.search { width: 430px; background: #333; border: 1px solid #5a5a5a; border-bottom-color: #777; display: flex; align-items: center; padding-left: 12px; }
.search-text { margin-left: 13px; font: 17.800px "Open Sans", sans-serif; color: #e6e6e6; white-space: nowrap; }
.taskview { width: 64.500px; padding-right: 5px; display: flex; align-items: center; justify-content: center; }
.task { width: 61.800px; display: flex; align-items: center; justify-content: center; position: relative; }
.task::after { content: ""; position: absolute; left: 5.500px; right: 5.500px; bottom: 0; height: 3px; background: #76b3e6; }
.task.plain::after { background: transparent; }
.lime { padding-right: 2px; }
.note { padding-right: 4px; }
.task.active { background: #484848; }
.task.active::after { left: 0; right: 0; }
.ps-icon { width: 28px; height: 28px; background: #001e36; border: 2px solid #31a8ff; color: #31a8ff; font: 700 15px "Open Sans", sans-serif; display: flex; align-items: center; justify-content: center; }
.ai-icon { width: 28px; height: 28px; margin-right: 2px; background: #fff; border-radius: 50%; display: flex; align-items: center; justify-content: center; }
.ai-doc { width: 14px; height: 17px; background: #3b78e7; color: #111; font: 700 9px "Liberation Sans", sans-serif; display: flex; align-items: flex-end; justify-content: center; }
.ij-icon { width: 26px; height: 26px; background: linear-gradient(135deg, #fe2857, #a33ce0 50%, #087cfa); padding: 3px; }
.ij-inner { width: 100%; height: 100%; background: #000; color: #fff; font: 700 10px "Liberation Mono", monospace; padding: 1px 0 0 3px; position: relative; line-height: 10px; }
.ij-bar { position: absolute; left: 3px; bottom: 2px; width: 8px; height: 1.500px; background: #fff; }
.gear-solid { fill: none; stroke: #fff; stroke-width: 3; }
.tray { position: relative; margin-left: auto; width: 520px; display: flex; align-items: center; color: #dcdcdc; font-family: "Open Sans", sans-serif; }
.tray-user { width: 132px; font-size: 14.800px; white-space: nowrap; }
.tray-more { width: 24px; padding-left: 11px; align-self: flex-start; font-size: 16px; line-height: 20px; color: #fff; }
.tray-icon { width: 30px; display: flex; justify-content: center; }
.icon-gap { margin-left: 1px; }
.tray-pen { margin: 0 0 0 5px; }
.tray-lang { width: 54px; font-size: 14.500px; text-align: center; }
.clock { width: 82px; display: flex; flex-direction: column; align-items: center; gap: 3px; font-size: 14.500px; line-height: 20px; white-space: nowrap; }
.notif { width: 62px; height: 40px; position: relative; display: flex; align-items: center; justify-content: center; }
.notif-badge { position: absolute; left: 30px; top: 19px; width: 20px; height: 20px; border-radius: 50%; background: #444; border: 1px solid #aaa; color: #fff; font-size: 12px; font-weight: 700; display: flex; align-items: center; justify-content: center; }
```
